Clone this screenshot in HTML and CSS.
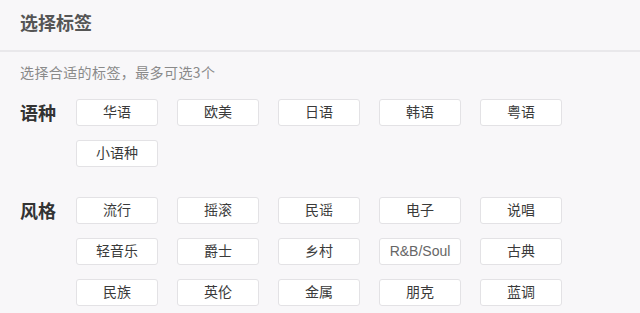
FILE: index.html
```html
<!DOCTYPE html>
<html lang="zh-CN">
<head>
<meta charset="utf-8">
<title>选择标签</title>
<link rel="stylesheet" href="styles.css">
</head>
<body>
<div class="header"><h1 class="title">选择标签</h1></div>
<p class="hint">选择合适的标签，最多可选3个</p>
<div class="section">
  <div class="label">语种</div>
  <div class="tags">
    <span class="tag">华语</span>
    <span class="tag">欧美</span>
    <span class="tag">日语</span>
    <span class="tag">韩语</span>
    <span class="tag">粤语</span>
    <span class="tag">小语种</span>
  </div>
</div>
<div class="section">
  <div class="label">风格</div>
  <div class="tags">
    <span class="tag">流行</span>
    <span class="tag">摇滚</span>
    <span class="tag">民谣</span>
    <span class="tag">电子</span>
    <span class="tag">说唱</span>
    <span class="tag">轻音乐</span>
    <span class="tag">爵士</span>
    <span class="tag">乡村</span>
    <span class="tag tag-latin">R&amp;B/Soul</span>
    <span class="tag">古典</span>
    <span class="tag">民族</span>
    <span class="tag">英伦</span>
    <span class="tag">金属</span>
    <span class="tag">朋克</span>
    <span class="tag">蓝调</span>
  </div>
</div>
</body>
</html>
```
FILE: styles.css
```css
html, body {
  margin: 0;
  padding: 0;
  background: #f8f7f9;
  font-family: "Liberation Sans", "Noto Sans CJK SC", sans-serif;
  color: #333;
}
.header {
  height: 50px;
  border-bottom: 2px solid #e9e8eb;
  display: flex;
  align-items: center;
  padding: 0 20px;
}
.title {
  margin: -6px 0 0;
  font-size: 18px;
  font-weight: bold;
  color: #555;
  line-height: 24px;
  font-family: "Noto Sans CJK SC", sans-serif;
}
.hint {
  margin: 10px 0 0;
  padding: 0 20px;
  font-size: 14px;
  line-height: 20px;
  letter-spacing: 0.4px;
  color: #8a8a8a;
  font-family: "Noto Sans CJK SC", sans-serif;
}
.section {
  display: flex;
  align-items: flex-start;
  padding-left: 20px;
  margin-top: 17px;
}
.section + .section {
  margin-top: 30px;
}
.label {
  width: 56px;
  font-size: 18px;
  font-weight: bold;
  line-height: 27px;
  color: #333;
  font-family: "Noto Sans CJK SC", sans-serif;
}
.tags {
  display: grid;
  grid-template-columns: repeat(5, 82px);
  column-gap: 19px;
  row-gap: 14px;
}
.tag {
  box-sizing: border-box;
  height: 27px;
  background: #fff;
  border: 1px solid #e3e2e5;
  border-radius: 3px;
  font-size: 14px;
  line-height: 25px;
  text-align: center;
  color: #3a3a3a;
}
.tag-latin {
  color: #666;
}
```
